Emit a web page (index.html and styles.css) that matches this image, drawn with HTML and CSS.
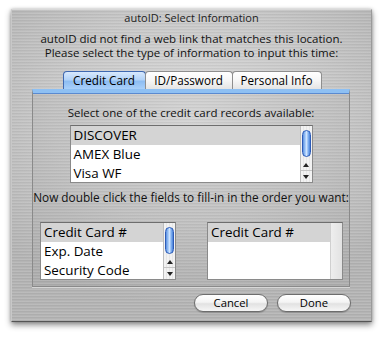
FILE: index.html
```html
<!DOCTYPE html>
<html>
<head>
<meta charset="utf-8">
<link rel="stylesheet" href="styles.css">
</head>
<body>
<div class="window">
  <div class="title">autoID: Select Information</div>
  <div class="message">autoID did not find a web link that matches this location.<br>Please select the type of information to input this time:</div>
  <div class="tabs">
    <div class="tab active">Credit Card</div>
    <div class="tab">ID/Password</div>
    <div class="tab">Personal Info</div>
  </div>
  <div class="panel">
    <div class="label first">Select one of the credit card records available:</div>
    <div class="list records">
      <div class="rows">
        <div class="row sel">DISCOVER</div>
        <div class="row">AMEX Blue</div>
        <div class="row">Visa WF</div>
      </div>
      <div class="scroll">
        <div class="thumb"></div>
        <div class="arrows">
          <div class="arrow up"></div>
          <div class="arrow down"></div>
        </div>
      </div>
    </div>
    <div class="label second">Now double click the fields to fill-in in the order you want:</div>
    <div class="pair">
      <div class="list small">
        <div class="rows">
          <div class="row sel">Credit Card #</div>
          <div class="row">Exp. Date</div>
          <div class="row">Security Code</div>
        </div>
        <div class="scroll">
          <div class="thumb"></div>
          <div class="arrows">
            <div class="arrow up"></div>
            <div class="arrow down"></div>
          </div>
        </div>
      </div>
      <div class="list small">
        <div class="rows">
          <div class="row sel">Credit Card #</div>
        </div>
        <div class="scroll empty"></div>
      </div>
    </div>
  </div>
  <div class="buttons">
    <div class="button">Cancel</div>
    <div class="button">Done</div>
  </div>
</div>
</body>
</html>
```
FILE: styles.css
```css
html, body {
  margin: 0;
  padding: 0;
  background: #ffffff;
}
body {
  font-family: "Open Sans", "DejaVu Sans", sans-serif;
  color: #000;
  width: 387px;
  height: 338px;
  overflow: hidden;
}
.window {
  margin: 9px 0 0 11px;
  width: 361px;
  height: 313px;
  box-sizing: border-box;
  display: flex;
  flex-direction: column;
  background:
    repeating-linear-gradient(180deg, rgba(255,255,255,0.10) 0px, rgba(255,255,255,0.10) 1px, rgba(0,0,0,0.04) 1px, rgba(0,0,0,0.04) 2px, rgba(255,255,255,0) 2px, rgba(255,255,255,0) 3px),
    radial-gradient(ellipse 70% 60% at 50% 35%, #dadada 0%, #c8c8c8 55%, #b4b4b4 100%);
  border-top: 1px solid #d8d8d8;
  border-left: 1px solid #c8c8c8;
  border-right: 1px solid #9a9a9a;
  border-bottom: 1px solid #555;
  box-shadow: 0 3px 6px rgba(0,0,0,0.45), 0 0 3px rgba(0,0,0,0.2);
}
.title {
  height: 16px;
  line-height: 16px;
  text-align: center;
  font-size: 11px;
  color: #222;
  white-space: nowrap;
}
.message {
  margin-top: 6px;
  text-align: center;
  font-size: 11.5px;
  line-height: 14px;
  color: #111;
  white-space: nowrap;
}
.tabs {
  margin-top: 11px;
  display: flex;
  justify-content: center;
  height: 18px;
  padding-left: 1px;
}
.tab {
  box-sizing: border-box;
  height: 18px;
  line-height: 17px;
  font-size: 11.7px;
  text-align: center;
  border: 1px solid #8e8e8e;
  border-bottom: none;
  border-radius: 4px 4px 0 0;
  background: linear-gradient(180deg, #ffffff 0%, #f6f6f6 50%, #e4e4e4 100%);
  width: 88px;
  white-space: nowrap;
}
.tab.active {
  width: 83px;
  border-color: #3f68b0;
  background: linear-gradient(180deg, #d8e9fd 0%, #b3d3f8 45%, #8dbdf2 55%, #a9d0fa 100%);
}
.tab + .tab {
  margin-left: -1px;
}
.tab:last-child {
  width: 90px;
}
.panel {
  margin: 0 21px 0 20px;
  height: 198px;
  box-sizing: border-box;
  border: 1px solid #8a8a8a;
  border-top: 4px solid #8ec0f3;
  background: rgba(0,0,0,0.03);
  box-shadow: inset 0 1px 0 #5a8ad0, 0 1px 0 rgba(255,255,255,0.5);
  display: flex;
  flex-direction: column;
  align-items: center;
}
.label {
  font-size: 11.5px;
  line-height: 14px;
  color: #111;
  white-space: nowrap;
}
.label.first {
  margin-top: 13px;
}
.label.second {
  margin-top: 7px;
  font-size: 11.8px;
}
.list {
  display: flex;
  background: #fff;
  border: 1px solid #8a8a8a;
  border-top-color: #6e6e6e;
  box-sizing: border-box;
}
.records {
  margin-top: 5px;
  width: 243px;
  height: 58px;
}
.rows {
  flex: 1;
  display: flex;
  flex-direction: column;
}
.row {
  height: 19px;
  line-height: 19px;
  padding-left: 3px;
  font-size: 13.4px;
  white-space: nowrap;
}
.row.sel {
  background: #d4d4d4;
}
.scroll {
  width: 11px;
  border-left: 1px solid #bdbdbd;
  background: repeating-linear-gradient(90deg, #f2f2f2 0px, #f2f2f2 2px, #e6e6e6 2px, #e6e6e6 3px);
  display: flex;
  flex-direction: column;
  align-items: center;
}
.scroll.empty {
  background: linear-gradient(90deg, #eeeeee, #e2e2e2);
  border-left: 1px solid #d0d0d0;
}
.thumb {
  margin-top: 4px;
  width: 9px;
  height: 27px;
  box-sizing: border-box;
  border: 1px solid #2d5cb8;
  border-radius: 5px;
  background: linear-gradient(90deg, #5b8fe0 0%, #a8cdfa 35%, #cfe4ff 50%, #7fb0f0 75%, #4a80d8 100%);
}
.arrows {
  margin-top: auto;
  width: 100%;
  display: flex;
  flex-direction: column;
}
.arrow {
  height: 11px;
  display: flex;
  align-items: center;
  justify-content: center;
}
.arrow.up {
  border-bottom: 1px solid #c4c4c4;
}
.arrow.up::before {
  content: "";
  border-left: 3px solid transparent;
  border-right: 3px solid transparent;
  border-bottom: 4px solid #222;
}
.arrow.down::before {
  content: "";
  border-left: 3px solid transparent;
  border-right: 3px solid transparent;
  border-top: 4px solid #222;
}
.pair {
  margin-top: 18px;
  align-self: stretch;
  display: flex;
  justify-content: space-between;
  padding: 0 6px 0 7px;
}
.small {
  width: 136px;
  height: 58px;
}
.buttons {
  margin-top: 7px;
  display: flex;
  justify-content: flex-end;
  padding-right: 20px;
  gap: 9px;
}
.button {
  box-sizing: border-box;
  width: 74px;
  height: 18px;
  line-height: 16px;
  font-size: 11.3px;
  text-align: center;
  border: 1px solid #6d6d6d;
  border-radius: 9px;
  background: linear-gradient(180deg, #ffffff 0%, #f4f4f4 45%, #e2e2e2 55%, #f6f6f6 100%);
  box-shadow: 0 1px 1px rgba(0,0,0,0.2);
  white-space: nowrap;
}
```
